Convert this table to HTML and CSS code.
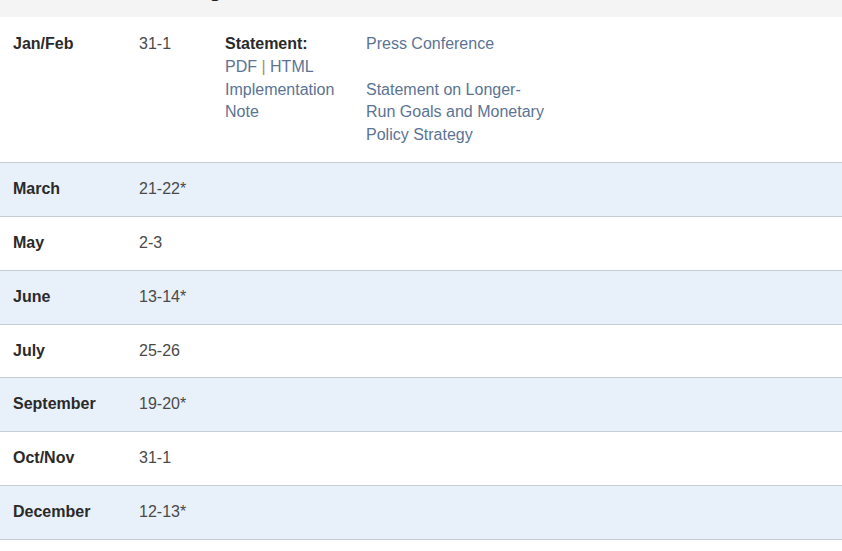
FILE: index.html
```html
<!DOCTYPE html>
<html lang="en">
<head>
<meta charset="utf-8">
<title>2023 FOMC Meetings</title>
<link rel="stylesheet" href="styles.css">
</head>
<body>
<div class="panel">
  <div class="panel-heading"><h4 class="panel-title">2023 FOMC Meetings</h4></div>
  <div class="row first">
    <div class="month">Jan/Feb</div>
    <div class="date">31-1</div>
    <div class="statement">
      <strong>Statement:</strong><br>
      <a href="#">PDF</a> <span class="sep">|</span> <a href="#">HTML</a><br>
      <a href="#">Implementation Note</a>
    </div>
    <div class="press">
      <a href="#">Press Conference</a>
      <div class="gap"></div>
      <a href="#">Statement on Longer-Run Goals and Monetary Policy Strategy</a>
    </div>
  </div>
  <div class="row alt"><div class="month">March</div><div class="date">21-22*</div></div>
  <div class="row"><div class="month">May</div><div class="date">2-3</div></div>
  <div class="row alt"><div class="month">June</div><div class="date">13-14*</div></div>
  <div class="row"><div class="month">July</div><div class="date">25-26</div></div>
  <div class="row alt"><div class="month">September</div><div class="date">19-20*</div></div>
  <div class="row"><div class="month">Oct/Nov</div><div class="date">31-1</div></div>
  <div class="row alt"><div class="month">December</div><div class="date">12-13*</div></div>
</div>
</body>
</html>
```
FILE: styles.css
```css
html, body {
  margin: 0;
  padding: 0;
  background: #ffffff;
}
body {
  font-family: "Liberation Sans", Arial, sans-serif;
  font-size: 16px;
  line-height: 22.8px;
  color: #444444;
}
.panel {
  width: 842px;
}
.panel-heading {
  height: 17px;
  overflow: hidden;
  background: #f4f4f4;
}
.panel-title {
  margin: -23px 0 0 13px;
  font-size: 22px;
  line-height: 24px;
  font-weight: bold;
  color: #222222;
}
.row {
  display: grid;
  grid-template-columns: 126px 86px 141px 180px;
  padding: 15px 13px 15px;
  height: 22.86px;
  border-bottom: 1px solid #c6cdd4;
}
.row.first {
  height: auto;
  padding: 16px 13px 15px;
}
.alt {
  background: #e8f0fa;
}
.month {
  font-weight: bold;
  color: #2a2a2a;
}
.date {
  color: #4a4a4a;
}
.statement {
  padding-right: 8px;
}
.statement strong {
  color: #2a2a2a;
}
a {
  color: #5b7494;
  text-decoration: none;
}
.sep {
  color: #a88c6a;
}
.gap {
  height: 22.8px;
}
```
